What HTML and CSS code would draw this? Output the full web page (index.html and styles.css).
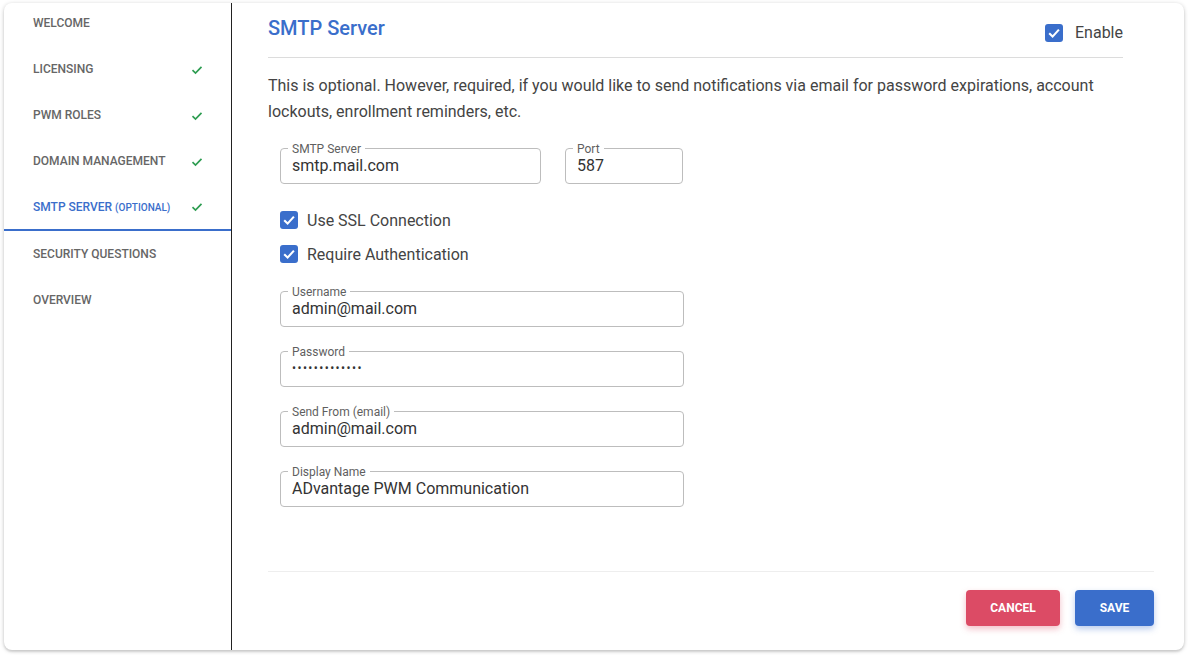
FILE: index.html
```html
<!DOCTYPE html>
<html lang="en">
<head>
<meta charset="utf-8">
<title>SMTP Server</title>
<link rel="stylesheet" href="styles.css">
</head>
<body>
<div class="card">
  <nav class="sidebar">
    <div class="nav-item"><span>WELCOME</span></div>
    <div class="nav-item"><span>LICENSING</span><svg class="tick" width="12" height="10" viewBox="0 0 12 10"><path d="M1.5 5.2 L4.5 8 L10.5 1.8" fill="none" stroke="#2e9d52" stroke-width="1.7"/></svg></div>
    <div class="nav-item"><span>PWM ROLES</span><svg class="tick" width="12" height="10" viewBox="0 0 12 10"><path d="M1.5 5.2 L4.5 8 L10.5 1.8" fill="none" stroke="#2e9d52" stroke-width="1.7"/></svg></div>
    <div class="nav-item"><span>DOMAIN MANAGEMENT</span><svg class="tick" width="12" height="10" viewBox="0 0 12 10"><path d="M1.5 5.2 L4.5 8 L10.5 1.8" fill="none" stroke="#2e9d52" stroke-width="1.7"/></svg></div>
    <div class="nav-item active"><span>SMTP SERVER <small>(OPTIONAL)</small></span><svg class="tick" width="12" height="10" viewBox="0 0 12 10"><path d="M1.5 5.2 L4.5 8 L10.5 1.8" fill="none" stroke="#2e9d52" stroke-width="1.7"/></svg></div>
    <div class="nav-item"><span>SECURITY QUESTIONS</span></div>
    <div class="nav-item"><span>OVERVIEW</span></div>
  </nav>
  <main class="main">
    <header class="header">
      <h1 class="title">SMTP Server</h1>
      <label class="check enable">
        <span class="box"><svg width="18" height="18" viewBox="0 0 18 18"><path d="M4.2 9.3 L7.6 12.6 L13.9 5.6" fill="none" stroke="#fff" stroke-width="2.1"/></svg></span>
        <span>Enable</span>
      </label>
    </header>
    <p class="intro">This is optional. However, required, if you would like to send notifications via email for password expirations, account lockouts, enrollment reminders, etc.</p>
    <div class="form">
      <div class="row">
        <div class="field w-server"><span class="flabel">SMTP Server</span><span class="value">smtp.mail.com</span></div>
        <div class="field w-port"><span class="flabel">Port</span><span class="value">587</span></div>
      </div>
      <div class="checks">
        <label class="check">
          <span class="box"><svg width="18" height="18" viewBox="0 0 18 18"><path d="M4.2 9.3 L7.6 12.6 L13.9 5.6" fill="none" stroke="#fff" stroke-width="2.1"/></svg></span>
          <span>Use SSL Connection</span>
        </label>
        <label class="check">
          <span class="box"><svg width="18" height="18" viewBox="0 0 18 18"><path d="M4.2 9.3 L7.6 12.6 L13.9 5.6" fill="none" stroke="#fff" stroke-width="2.1"/></svg></span>
          <span>Require Authentication</span>
        </label>
      </div>
      <div class="stack">
        <div class="field w-wide"><span class="flabel">Username</span><span class="value">admin@mail.com</span></div>
        <div class="field w-wide"><span class="flabel">Password</span><span class="value dots">•••••••••••••</span></div>
        <div class="field w-wide"><span class="flabel">Send From (email)</span><span class="value">admin@mail.com</span></div>
        <div class="field w-wide"><span class="flabel">Display Name</span><span class="value">ADvantage PWM Communication</span></div>
      </div>
    </div>
    <footer class="footer">
      <button class="btn cancel">CANCEL</button>
      <button class="btn save">SAVE</button>
    </footer>
  </main>
</div>
</body>
</html>
```

FILE: styles.css
```css
* { box-sizing: border-box; }
html, body { height: 100%; }
body {
  margin: 0;
  padding: 3px 5px 9px 4px;
  background: #ffffff;
  font-family: Roboto, "Liberation Sans", Arial, sans-serif;
  color: #444;
}
.card {
  height: 100%;
  display: flex;
  background: #fff;
  border-radius: 8px;
  box-shadow: 0 1px 4px rgba(0,0,0,0.22), 0 2px 2px rgba(0,0,0,0.08);
  overflow: hidden;
}
.sidebar {
  width: 228px;
  flex: none;
  border-right: 1px solid #222;
  margin-top: -3px;
}
.nav-item {
  height: 46px;
  display: flex;
  align-items: center;
  justify-content: space-between;
  padding: 0 28px 0 29px;
  font-size: 12px;
  font-weight: 500;
  color: #666666;
  letter-spacing: 0;
}
.nav-item small { font-size: 10px; }
.nav-item.active {
  color: #3a6ecb;
  height: 47px;
  border-bottom: 2px solid #3a6ecb;
}
.tick { display: block; margin-top: 1px; }
.main {
  flex: 1;
  display: flex;
  flex-direction: column;
  padding: 13px 30px 0 36px;
}
.header {
  display: flex;
  justify-content: space-between;
  align-items: flex-start;
  margin-right: 31px;
  padding-bottom: 15px;
  border-bottom: 1px solid #dcdcdc;
}
.title {
  margin: 0;
  font-size: 20px;
  line-height: 24px;
  font-weight: 500;
  color: #3a6ecb;
}
.check {
  display: flex;
  align-items: center;
  font-size: 16px;
  color: #444;
}
.box {
  width: 18px;
  height: 18px;
  border-radius: 3px;
  background: #3a6ecb;
  display: block;
  margin-right: 9px;
}
.box svg { display: block; }
.enable { margin-top: 7px; }
.enable .box { margin-right: 12px; }
.intro {
  margin: 15px 31px 0 0;
  font-size: 16px;
  line-height: 26px;
  color: #444;
}
.form { padding-left: 12px; }
.row {
  display: flex;
  gap: 24px;
  margin-top: 23px;
}
.field {
  position: relative;
  height: 36px;
  border: 1px solid #bdbdbd;
  border-radius: 4px;
  padding: 7px 11px 0;
}
.flabel {
  position: absolute;
  top: -7px;
  left: 7px;
  padding: 0 4px;
  background: #fff;
  font-size: 12px;
  line-height: 14px;
  color: #5f5f5f;
}
.value {
  display: block;
  font-size: 16px;
  line-height: 19px;
  color: #333;
}
.dots { font-size: 12px; letter-spacing: 1.4px; }
.w-server { width: 261px; }
.w-port { width: 118px; }
.w-wide { width: 404px; }
.checks {
  margin-top: 19px;
}
.checks .check { height: 34px; }
.stack {
  display: flex;
  flex-direction: column;
  gap: 24px;
  margin-top: 20px;
}
.footer {
  margin-top: auto;
  border-top: 1px solid #eeeeee;
  padding: 18px 0 24px;
  display: flex;
  justify-content: flex-end;
  gap: 15px;
}
.btn {
  height: 36px;
  border: none;
  border-radius: 4px;
  color: #fff;
  font-family: inherit;
  font-size: 12px;
  font-weight: 700;
  letter-spacing: 0;
}
.cancel {
  width: 94px;
  background: #dc4b65;
  box-shadow: 0 3px 6px rgba(220,75,101,0.35);
}
.save {
  width: 79px;
  background: #3a6ecb;
  box-shadow: 0 3px 6px rgba(58,110,203,0.35);
}
```
